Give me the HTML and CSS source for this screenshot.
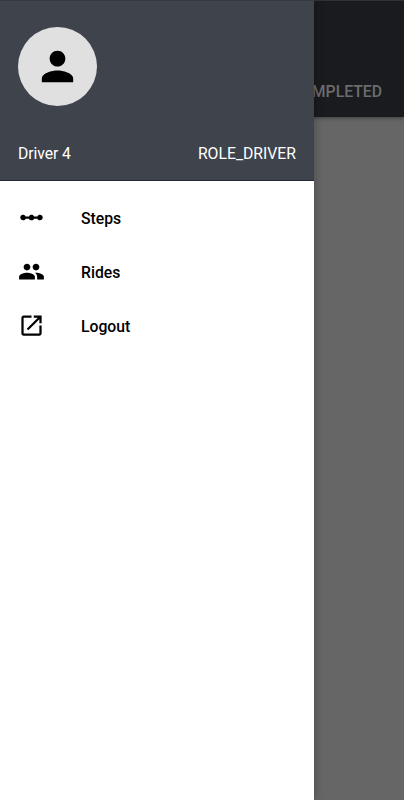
FILE: index.html
```html
<!DOCTYPE html>
<html lang="en">
<head>
  <meta charset="UTF-8" />
  <meta name="viewport" content="width=device-width, initial-scale=1.0" />
  <title>Driver</title>
  <link rel="stylesheet" href="styles.css">
</head>
<body>
  <div class="page">
    <div class="app-bar">
      <div class="tab">COMPLETED</div>
    </div>
    <div class="content"></div>
  </div>

  <div class="drawer">
    <div class="drawer-header">
      <div class="avatar">
        <svg class="person" viewBox="0 0 24 24"><path d="M12 12c2.21 0 4-1.79 4-4s-1.79-4-4-4-4 1.79-4 4 1.79 4 4 4zm0 2c-2.67 0-8 1.34-8 4v2h16v-2c0-2.66-5.33-4-8-4z"/></svg>
      </div>
      <div class="user-row">
        <span class="user-name">Driver 4</span>
        <span class="user-role">ROLE_DRIVER</span>
      </div>
    </div>

    <nav class="menu">
      <a class="menu-item">
        <svg class="icon" viewBox="0 0 24 24"><path d="M19.5 9.5c-1.03 0-1.9.62-2.29 1.5h-2.92c-.39-.88-1.26-1.5-2.29-1.5s-1.9.62-2.29 1.5H6.79c-.39-.88-1.26-1.5-2.29-1.5C3.12 9.5 2 10.62 2 12s1.12 2.5 2.5 2.5c1.03 0 1.9-.62 2.29-1.5h2.92c.39.88 1.26 1.5 2.29 1.5s1.9-.62 2.29-1.5h2.92c.39.88 1.26 1.5 2.29 1.5 1.38 0 2.5-1.12 2.5-2.5s-1.12-2.5-2.5-2.5z"/></svg>
        <span class="menu-label">Steps</span>
      </a>
      <a class="menu-item">
        <svg class="icon" viewBox="0 0 24 24"><path d="M16 11c1.66 0 2.99-1.34 2.99-3S17.66 5 16 5c-1.66 0-3 1.34-3 3s1.34 3 3 3zm-8 0c1.66 0 2.99-1.34 2.99-3S9.66 5 8 5C6.34 5 5 6.34 5 8s1.34 3 3 3zm0 2c-2.33 0-7 1.17-7 3.5V19h14v-2.5c0-2.33-4.67-3.5-7-3.5zm8 0c-.29 0-.62.02-.97.05 1.16.84 1.97 1.97 1.97 3.45V19h6v-2.5c0-2.33-4.67-3.5-7-3.5z"/></svg>
        <span class="menu-label">Rides</span>
      </a>
      <a class="menu-item">
        <svg class="icon" viewBox="0 0 24 24"><path d="M19 19H5V5h7V3H5c-1.11 0-2 .9-2 2v14c0 1.1.89 2 2 2h14c1.1 0 2-.9 2-2v-7h-2v7zM14 3v2h3.59l-9.83 9.83 1.41 1.41L19 6.41V10h2V3h-7z"/></svg>
        <span class="menu-label">Logout</span>
      </a>
    </nav>
  </div>
</body>
</html>
```
FILE: styles.css
```css
body {
  margin: 0;
  height: 800px;
  overflow: hidden;
  position: relative;
  font-family: Roboto, sans-serif;
  font-size: 15.75px;
}
.page {
  height: 800px;
  display: flex;
  flex-direction: column;
  background: #666;
}
.app-bar {
  height: 117px;
  box-sizing: border-box;
  padding: 0 22px 15px 0;
  display: flex;
  align-items: flex-end;
  justify-content: flex-end;
  background: #1a1b1e;
  border-top: 1px solid #303237;
  box-shadow: 0 1px 4px rgba(0,0,0,0.4);
}
.tab {
  color: #6b6c6e;
  font-weight: 500;
  line-height: 20px;
}
.content {
  flex: 1;
}
.drawer {
  position: absolute;
  top: 0;
  left: 0;
  width: 314px;
  height: 800px;
  background: #fff;
  box-shadow: 0 0 9px rgba(0,0,0,0.3);
}
.drawer-header {
  height: 181px;
  box-sizing: border-box;
  padding: 26px 18px 16px;
  display: flex;
  flex-direction: column;
  justify-content: space-between;
  background: #3f434c;
  border-top: 1px solid #363a42;
  border-bottom: 1px solid #23293a;
}
.avatar {
  width: 79px;
  height: 79px;
  display: flex;
  align-items: center;
  justify-content: center;
  border-radius: 50%;
  background: #e0e0e0;
}
.person {
  width: 47px;
  height: 47px;
}
.user-row {
  display: flex;
  justify-content: space-between;
  line-height: 20px;
  color: #fff;
}
.user-name {
  letter-spacing: -0.1px;
}
.menu {
  padding-top: 9px;
}
.menu-item {
  height: 54px;
  padding-left: 18px;
  display: flex;
  align-items: center;
  gap: 36px;
  color: #000;
  font-weight: 500;
}
.menu-label {
  padding-top: 2px;
}
.icon {
  width: 27px;
  height: 27px;
}
```
